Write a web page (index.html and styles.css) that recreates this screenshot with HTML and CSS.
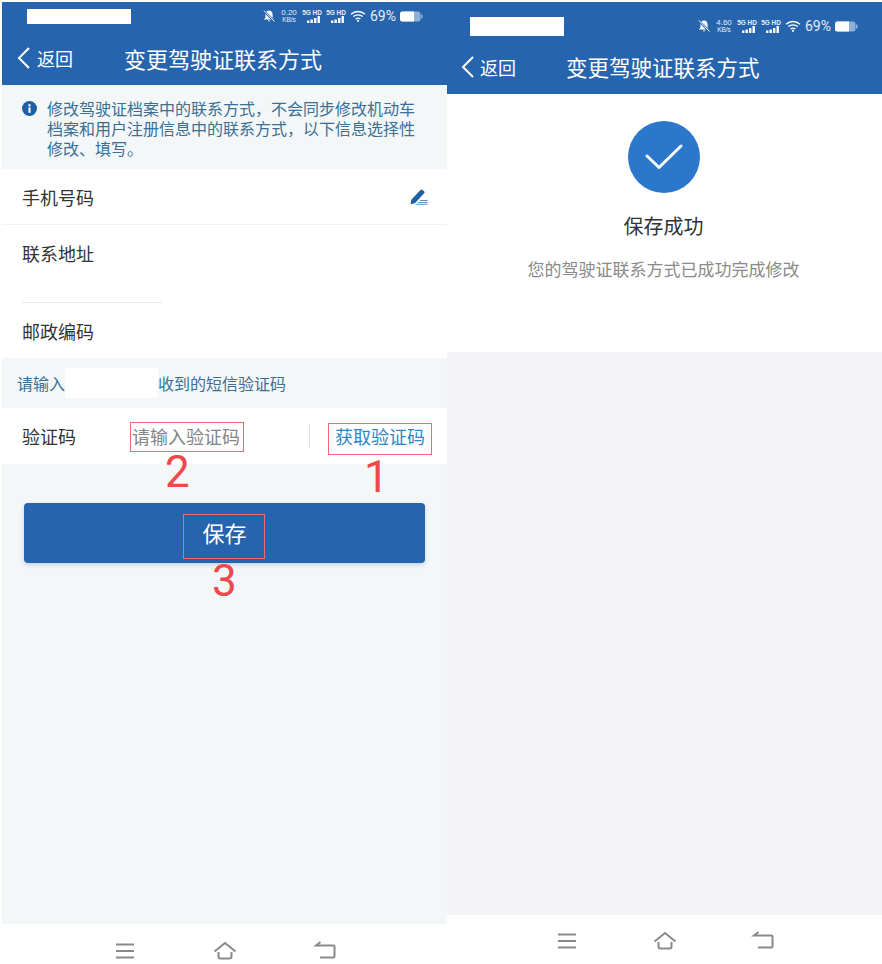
FILE: index.html
```html
<!DOCTYPE html>
<html lang="zh-CN">
<head>
<meta charset="utf-8">
<title>变更驾驶证联系方式</title>
<link rel="stylesheet" href="styles.css">
</head>
<body>
<div class="screens">
  <section class="phone phone-left">
    <header class="appbar appbar-left">
      <div class="status status-left">
        <div class="mask mask-left"></div>
        <div class="indicators">
          <svg class="ic-bell" viewBox="0 0 14 14"><path d="M7 1.500c-2.400 0-3.600 1.800-3.600 4v3L2 10.500h10L10.600 8.500v-3C10.600 3.300 9.400 1.500 7 1.500zM5.700 11.500a1.400 1.400 0 0 0 2.600 0z" fill="#fff"/><path d="M1.500 1.500l11 11" stroke="#2764ae" stroke-width="2.400"/><path d="M2 1.500l10.500 11" stroke="#fff" stroke-width="1"/></svg>
          <div class="speed"><span>0.20</span><span>KB/s</span></div>
          <div class="sim"><span>5G HD</span><svg viewBox="0 0 20 7"><rect x="5" y="4.500" width="2.400" height="2.500"/><rect x="8.500" y="3.500" width="2.400" height="3.500"/><rect x="12" y="2" width="2.400" height="5"/><rect x="15.500" y="0" width="2.400" height="7"/></svg></div>
          <div class="sim"><span>5G HD</span><svg viewBox="0 0 20 7"><rect x="5" y="4.500" width="2.400" height="2.500"/><rect x="8.500" y="3.500" width="2.400" height="3.500"/><rect x="12" y="2" width="2.400" height="5"/><rect x="15.500" y="0" width="2.400" height="7"/></svg></div>
          <svg class="ic-wifi" viewBox="0 0 16 12"><path d="M1 4.200C5 .6 11 .6 15 4.200M3.300 6.600c2.700-2.300 6.700-2.300 9.400 0M5.600 9c1.400-1.100 3.400-1.100 4.800 0" fill="none" stroke="#fff" stroke-width="1.300"/><circle cx="8" cy="10.800" r="1.100" fill="#fff"/></svg>
          <span class="pct">69%</span>
          <svg class="ic-batt" viewBox="0 0 23 11"><rect x="0" y="0.500" width="20.500" height="10" rx="2.500" fill="#8fb0d8"/><path d="M2.500.5H14v10H2.500A2.500 2.500 0 0 1 0 8V3A2.500 2.500 0 0 1 2.500.5z" fill="#fff"/><path d="M21 3.500h.5a1.200 1.200 0 0 1 1.200 1.200v1.600a1.200 1.200 0 0 1-1.200 1.200H21z" fill="#8fb0d8"/></svg>
        </div>
      </div>
      <div class="titlebar titlebar-left">
        <div class="back"><svg class="ic-back" viewBox="0 0 14 24"><path d="M12 2L2 12l10 10" fill="none" stroke="#fff" stroke-width="2"/></svg><span>返回</span></div>
        <h1 class="title title-left">变更驾驶证联系方式</h1>
      </div>
    </header>

    <div class="notice">
      <svg class="ic-info" viewBox="0 0 14 14"><circle cx="7" cy="7" r="7" fill="#1f5fa6"/><rect x="6" y="6" width="2" height="5" fill="#fff"/><rect x="6" y="3" width="2" height="2" fill="#fff"/></svg>
      <p>修改驾驶证档案中的联系方式，不会同步修改机动车档案和用户注册信息中的联系方式，以下信息选择性修改、填写。</p>
    </div>

    <div class="form">
      <div class="row row-phone">
        <span class="label">手机号码</span>
        <svg class="ic-edit" viewBox="0 0 18 16"><path d="M0.500 15.500l.8-4.800L10.500 1a1.500 1.500 0 0 1 2.100-.1l1.400 1.300a1.500 1.500 0 0 1 .1 2.100L5.200 14z" fill="#1f5fa6"/><path d="M10 11.500h7.500M8 13.500h9.500M5.500 15.300h12" stroke="#5f8fc4" stroke-width="1"/></svg>
      </div>
      <div class="row-address">
        <span class="label">联系地址</span>
      </div>
      <div class="row row-post">
        <span class="label">邮政编码</span>
      </div>
    </div>

    <div class="smsbar">
      <span>请输入</span><span class="mask mask-sms"></span><span>收到的短信验证码</span>
    </div>

    <div class="row row-code">
      <span class="label label-code">验证码</span>
      <span class="placeholder">请输入验证码</span>
      <span class="vline"></span>
      <span class="getcode">获取验证码</span>
    </div>

    <div class="content">
      <button class="save" type="button">保存</button>
    </div>

    <nav class="navbar navbar-left">
      <svg class="ic-nav" viewBox="0 0 24 20"><path d="M3 3.500h18M3 10h18M3 16.500h18" stroke="#8a8a8a" stroke-width="2" fill="none"/></svg>
      <svg class="ic-nav" viewBox="0 0 24 20"><path d="M1.500 10.500L12 2l10.500 8.500M5.500 11v4.500a2 2 0 0 0 2 2h9a2 2 0 0 0 2-2V11" stroke="#8a8a8a" stroke-width="2" fill="none"/></svg>
      <svg class="ic-nav" viewBox="0 0 24 20"><path d="M7.500 1L3 4.500h17.500a1 1 0 0 1 1 1v10a1 1 0 0 1-1 1H7" stroke="#8a8a8a" stroke-width="2" fill="none"/></svg>
    </nav>

    <i class="mark mark-2"></i>
    <i class="mark mark-1"></i>
    <i class="mark mark-3"></i>
    <b class="num num-1">1</b>
    <b class="num num-2">2</b>
    <b class="num num-3">3</b>
  </section>

  <section class="phone phone-right">
    <header class="appbar appbar-right">
      <div class="status status-right">
        <div class="mask mask-right"></div>
        <div class="indicators">
          <svg class="ic-bell" viewBox="0 0 14 14"><path d="M7 1.500c-2.400 0-3.600 1.800-3.600 4v3L2 10.500h10L10.600 8.500v-3C10.600 3.300 9.400 1.500 7 1.500zM5.700 11.500a1.400 1.400 0 0 0 2.600 0z" fill="#fff"/><path d="M1.500 1.500l11 11" stroke="#2764ae" stroke-width="2.400"/><path d="M2 1.500l10.500 11" stroke="#fff" stroke-width="1"/></svg>
          <div class="speed"><span>4.60</span><span>KB/s</span></div>
          <div class="sim"><span>5G HD</span><svg viewBox="0 0 20 7"><rect x="5" y="4.500" width="2.400" height="2.500"/><rect x="8.500" y="3.500" width="2.400" height="3.500"/><rect x="12" y="2" width="2.400" height="5"/><rect x="15.500" y="0" width="2.400" height="7"/></svg></div>
          <div class="sim"><span>5G HD</span><svg viewBox="0 0 20 7"><rect x="5" y="4.500" width="2.400" height="2.500"/><rect x="8.500" y="3.500" width="2.400" height="3.500"/><rect x="12" y="2" width="2.400" height="5"/><rect x="15.500" y="0" width="2.400" height="7"/></svg></div>
          <svg class="ic-wifi" viewBox="0 0 16 12"><path d="M1 4.200C5 .6 11 .6 15 4.200M3.300 6.600c2.700-2.300 6.700-2.300 9.400 0M5.600 9c1.400-1.100 3.400-1.100 4.800 0" fill="none" stroke="#fff" stroke-width="1.300"/><circle cx="8" cy="10.800" r="1.100" fill="#fff"/></svg>
          <span class="pct">69%</span>
          <svg class="ic-batt" viewBox="0 0 23 11"><rect x="0" y="0.500" width="20.500" height="10" rx="2.500" fill="#8fb0d8"/><path d="M2.500.5H14v10H2.500A2.500 2.500 0 0 1 0 8V3A2.500 2.500 0 0 1 2.500.5z" fill="#fff"/><path d="M21 3.500h.5a1.200 1.200 0 0 1 1.200 1.200v1.600a1.200 1.200 0 0 1-1.200 1.200H21z" fill="#8fb0d8"/></svg>
        </div>
      </div>
      <div class="titlebar titlebar-right">
        <div class="back"><svg class="ic-back" viewBox="0 0 14 24"><path d="M12 2L2 12l10 10" fill="none" stroke="#fff" stroke-width="2"/></svg><span>返回</span></div>
        <h1 class="title title-right">变更驾驶证联系方式</h1>
      </div>
    </header>

    <div class="result">
      <svg class="ic-ok" viewBox="0 0 72 72"><circle cx="36" cy="36" r="36" fill="#2a77cc"/><path d="M19 35l12 11.500L53 25" fill="none" stroke="#fff" stroke-width="3" stroke-linecap="round" stroke-linejoin="round"/></svg>
      <div class="ok-title">保存成功</div>
      <div class="ok-desc">您的驾驶证联系方式已成功完成修改</div>
    </div>

    <div class="filler"></div>

    <nav class="navbar navbar-right">
      <svg class="ic-nav" viewBox="0 0 24 20"><path d="M3 3.500h18M3 10h18M3 16.500h18" stroke="#8a8a8a" stroke-width="2" fill="none"/></svg>
      <svg class="ic-nav" viewBox="0 0 24 20"><path d="M1.500 10.500L12 2l10.500 8.500M5.500 11v4.500a2 2 0 0 0 2 2h9a2 2 0 0 0 2-2V11" stroke="#8a8a8a" stroke-width="2" fill="none"/></svg>
      <svg class="ic-nav" viewBox="0 0 24 20"><path d="M7.500 1L3 4.500h17.500a1 1 0 0 1 1 1v10a1 1 0 0 1-1 1H7" stroke="#8a8a8a" stroke-width="2" fill="none"/></svg>
    </nav>
  </section>
</div>
</body>
</html>
```

FILE: styles.css
```css
* { box-sizing: border-box; }
html, body { margin: 0; padding: 0; background: #fff; }
body { font-family: "Noto Sans CJK SC", "Noto Sans", sans-serif; }

.screens { display: flex; width: 882px; height: 964px; overflow: hidden; padding-top: 2px; }
.phone { display: flex; flex-direction: column; height: 962px; position: relative; overflow: hidden; }
.phone-left { width: 445px; margin-left: 2px; background: #f4f7f8; }
.phone-right { width: 435px; background: #f3f3f8; }

.appbar { background: #2764ae; color: #fff; display: flex; flex-direction: column; flex: none; }
.appbar-left { height: 83px; }
.appbar-right { height: 92px; }
.status { display: flex; align-items: center; justify-content: space-between; flex: none; }
.status-left { height: 28px; padding: 0 24px 0 25px; }
.status-right { height: 48px; padding: 0 24px 0 23px; }
.mask { background: #fff; display: block; }
.mask-left { width: 104px; height: 15px; }
.mask-right { width: 94px; height: 19px; }
.indicators { display: flex; align-items: center; gap: 4px; }
.ic-bell { width: 14px; height: 14px; }
.speed { display: flex; flex-direction: column; align-items: center; font-family: "Liberation Sans", sans-serif; font-size: 8px; line-height: 7px; width: 18px; color: #e6eef8; }
.speed span:last-child { font-size: 6.500px; line-height: 7px; }
.sim { display: flex; flex-direction: column; align-items: flex-end; width: 20px; font-family: "Liberation Sans", sans-serif; font-weight: bold; font-size: 6.500px; line-height: 7px; white-space: nowrap; color: #e6eef8; }
.sim svg { width: 20px; height: 7px; fill: #fff; }
.ic-wifi { width: 16px; height: 12px; }
.pct { font-family: "Roboto", sans-serif; font-size: 14px; line-height: 14px; color: #e3ecf7; }
.ic-batt { width: 23px; height: 11px; }

.titlebar { display: flex; align-items: center; flex: 1; padding-left: 14px; }
.titlebar-left { padding-left: 15px; }
.titlebar-left .back { gap: 6px; }
.titlebar-right { padding-bottom: 10px; }
.back { display: flex; align-items: center; gap: 5px; font-size: 18px; line-height: 24px; }
.ic-back { width: 14px; height: 24px; }
.title { margin: 0; font-weight: 400; font-size: 22px; line-height: 30px; white-space: nowrap; }
.title-left { margin-left: 51px; }
.title-right { margin-left: 50px; font-size: 21.500px; }

.notice { height: 84px; flex: none; padding: 13px 0 0 20px; display: flex; align-items: flex-start; gap: 10px; color: #3a6f96; }
.ic-info { width: 15px; height: 15px; flex: none; margin-top: 3px; }
.notice p { margin: 0; font-size: 16px; line-height: 20px; width: 372px; }

.form { background: #fff; flex: none; }
.row { display: flex; align-items: center; background: #fff; flex: none; }
.label { font-size: 18px; line-height: 26px; color: #333; }
.row-phone { height: 56px; padding: 0 19px 0 20px; justify-content: space-between; border-bottom: 1px solid #f0f1f2; }
.ic-edit { width: 18px; height: 16px; }
.row-address { height: 78px; margin-left: 20px; width: 140px; padding-top: 15px; border-bottom: 1px solid #e8eaec; }
.row-post { height: 55px; padding: 0 20px; }

.smsbar { height: 50px; flex: none; display: flex; align-items: center; padding-left: 15px; font-size: 16px; color: #3a6f96; line-height: 22px; }
.mask-sms { width: 93px; height: 30px; }

.row-code { height: 56px; padding: 0 15px 0 20px; }
.label-code { width: 110px; flex: none; }
.placeholder { width: 177px; flex: none; font-size: 18px; color: #858585; white-space: nowrap; }
.vline { width: 1px; height: 24px; background: #dfe1e3; margin-right: 25px; flex: none; }
.getcode { font-size: 18px; color: #2f87c5; white-space: nowrap; }

.content { flex: 1; padding: 39px 22px 0; }
.save { display: block; width: 401px; height: 60px; border: 0; border-radius: 4px; background: #2764ae; color: #fff; font-family: inherit; font-size: 22px; box-shadow: 0 2px 4px rgba(39, 100, 174, .25); padding: 0 0 2px; }

.navbar { flex: none; background: #fff; display: flex; align-items: flex-start; }
.navbar-left { height: 40px; padding: 17px 110px 0 111px; justify-content: space-between; }
.navbar-right { height: 49px; padding: 16px 107px 0 108px; justify-content: space-between; }
.ic-nav { width: 24px; height: 20px; }

.result { height: 258px; flex: none; background: #fff; display: flex; flex-direction: column; align-items: center; padding-top: 27px; }
.ic-ok { width: 72px; height: 72px; margin-right: 2px; }
.ok-title { font-size: 20px; line-height: 28px; color: #333; margin-top: 19px; margin-right: 2px; }
.ok-desc { font-size: 17px; line-height: 24px; color: #8a8a8a; margin-top: 17px; margin-right: 2px; }
.filler { flex: 1; }

.mark { position: absolute; border: 1px solid #ee6a70; display: block; }
.mark-2 { left: 128px; top: 420px; width: 114px; height: 30px; }
.mark-1 { left: 326px; top: 421px; width: 104px; height: 32px; }
.mark-3 { left: 181px; top: 512px; width: 82px; height: 45px; }
.num { position: absolute; font-family: "Roboto", sans-serif; font-weight: 400; font-size: 44px; line-height: 44px; color: #f0484a; }
.num-1 { left: 362px; top: 453px; }
.num-2 { left: 163px; top: 448px; }
.num-3 { left: 210px; top: 557px; }
```
